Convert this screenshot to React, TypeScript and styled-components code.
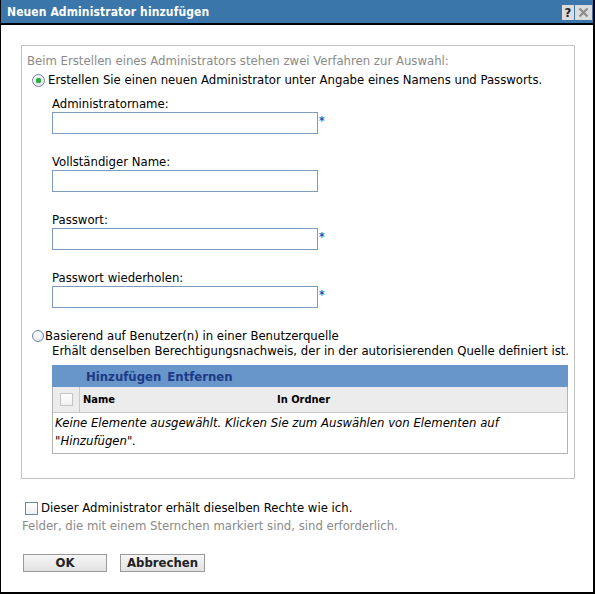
import React from "react";
import styled, { createGlobalStyle } from "styled-components";

const GlobalStyle = createGlobalStyle`
  html, body { margin: 0; padding: 0; background: #fff; }
  body {
    font-family: "DejaVu Sans Condensed", "DejaVu Sans", sans-serif;
    font-stretch: condensed;
    font-size: 13px;
    color: #000;
  }
  * { box-sizing: border-box; }
`;

const Dialog = styled.div`
  width: 595px;
  height: 594px;
  border-left: 1px solid #000;
  border-right: 2px solid #000;
  border-bottom: 2px solid #000;
  display: flex;
  flex-direction: column;
  background: #fff;
`;

const TitleBar = styled.div`
  height: 25px;
  flex: none;
  background: #3a76a9;
  border-bottom: 2px solid #000;
  display: flex;
  align-items: center;
  justify-content: space-between;
  padding: 0 1px 0 6px;
`;

const Title = styled.span`
  color: #fff;
  font-weight: bold;
  font-size: 12px;
  letter-spacing: 0.1px;
`;

const TitleButtons = styled.div`
  display: flex;
  gap: 1px;
  align-self: flex-start;
  margin-top: 5px;
`;

const TitleButton = styled.div<{ $w: number }>`
  width: ${(p) => p.$w}px;
  height: 15px;
  background: #dcdcdc;
  display: flex;
  align-items: center;
  justify-content: center;
  font-weight: bold;
  font-size: 13px;
  color: #222;
  line-height: 1;
`;

const Body = styled.div`
  padding: 20px 0 0 20px;
  display: flex;
  flex-direction: column;
`;

const Box = styled.div`
  width: 554px;
  border: 1px solid #c2c2c2;
  padding: 7px 6px 24px 5px;
  display: flex;
  flex-direction: column;
`;

const Intro = styled.div`
  color: #8a8a8a;
  line-height: 16px;
`;

const RadioRow = styled.label<{ $gap: number; $mt: number; $indent: number }>`
  display: flex;
  align-items: center;
  gap: ${(p) => p.$gap}px;
  margin-top: ${(p) => p.$mt}px;
  padding-left: ${(p) => p.$indent}px;
  line-height: 16px;
`;

const RadioDot = styled.span<{ $checked?: boolean; $size: number }>`
  width: ${(p) => p.$size}px;
  height: ${(p) => p.$size}px;
  border-radius: 50%;
  border: 1px solid #6f86a0;
  background: radial-gradient(circle at 40% 35%, #ffffff 0%, #e4e8ee 70%, #cdd4de 100%);
  display: inline-flex;
  align-items: center;
  justify-content: center;
  flex: none;
  &::after {
    content: "";
    display: ${(p) => (p.$checked ? "block" : "none")};
    width: 5px;
    height: 5px;
    border-radius: 50%;
    background: #2fae3c;
    box-shadow: 0 0 1px #1d8a28;
  }
`;

const Fields = styled.div`
  display: flex;
  flex-direction: column;
  padding-left: 25px;
  margin-top: 8px;
  gap: 20px;
`;

const Field = styled.div`
  display: flex;
  flex-direction: column;
`;

const FieldLabel = styled.div`
  line-height: 16px;
`;

const InputRow = styled.div`
  display: flex;
  align-items: flex-start;
`;

const TextInput = styled.input`
  width: 266px;
  height: 22px;
  border: 1px solid #7d9bbd;
  padding: 0 3px;
  font: inherit;
  outline: none;
  background: #fff;
`;

const Required = styled.span`
  color: #2458b0;
  font-size: 12px;
  font-weight: bold;
  line-height: 1;
  margin-top: 3px;
  margin-left: 1px;
`;

const Description = styled.div`
  padding-left: 25px;
  line-height: 15px;
  margin-top: -1px;
  white-space: nowrap;
`;

const Table = styled.div`
  margin: 7px 0 0 25px;
  width: 516px;
  border: 1px solid #b4b4b4;
  border-top: none;
  display: flex;
  flex-direction: column;
`;

const TableToolbar = styled.div`
  height: 22px;
  background: #6896cb;
  display: flex;
  align-items: center;
  gap: 6px;
  padding-left: 34px;
  margin: 0 -1px;
`;

const ToolbarLink = styled.span`
  color: #1c3a86;
  font-weight: bold;
  font-size: 13px;
`;

const HeaderRow = styled.div`
  height: 26px;
  background: #ececec;
  border-bottom: 1px solid #c8c8c8;
  display: grid;
  grid-template-columns: 27px 194px 1fr;
  align-items: stretch;
`;

const HeaderCheckCell = styled.div`
  display: flex;
  align-items: center;
  justify-content: flex-end;
  border-right: 1px solid #c8c8c8;
  padding-right: 6px;
`;

const HeaderCell = styled.div`
  display: flex;
  align-items: center;
  padding-left: 3px;
  font-weight: bold;
  font-size: 11px;
`;

const SmallBox = styled.span<{ $size: number; $border: string }>`
  width: ${(p) => p.$size}px;
  height: ${(p) => p.$size}px;
  border: 1px solid ${(p) => p.$border};
  background: linear-gradient(#ffffff, #f0f0f0);
  display: inline-block;
  flex: none;
`;

const EmptyMessage = styled.div`
  font-style: italic;
  line-height: 18px;
  padding: 1px 3px 3px 2px;
`;

const CheckRow = styled.label`
  display: flex;
  align-items: center;
  gap: 3px;
  margin: 21px 0 0 4px;
  line-height: 16px;
`;

const Note = styled.div`
  color: #8a8a8a;
  line-height: 16px;
  margin-left: 1px;
  margin-top: 2px;
`;

const Buttons = styled.div`
  display: flex;
  gap: 13px;
  margin: 20px 0 0 2px;
`;

const Button = styled.button<{ $w: number }>`
  width: ${(p) => p.$w}px;
  height: 18px;
  border: 1px solid #9a9a9a;
  background: linear-gradient(#f6f6f6, #e2e2e2);
  font-family: inherit;
  font-weight: bold;
  font-size: 13px;
  color: #222;
  padding: 0;
  line-height: 16px;
`;

export default function App() {
  return (
    <>
      <GlobalStyle />
      <Dialog>
        <TitleBar>
          <Title>Neuen Administrator hinzufügen</Title>
          <TitleButtons>
            <TitleButton $w={12}>?</TitleButton>
            <TitleButton $w={17}>
              <svg width="11" height="11" viewBox="0 0 11 11">
                <path d="M1.5 1.5 L9.5 9.5 M9.5 1.5 L1.5 9.5" stroke="#8a8a8a" strokeWidth="2" />
              </svg>
            </TitleButton>
          </TitleButtons>
        </TitleBar>
        <Body>
          <Box>
            <Intro>Beim Erstellen eines Administrators stehen zwei Verfahren zur Auswahl:</Intro>
            <RadioRow $gap={3} $mt={3} $indent={5}>
              <RadioDot $checked $size={13} />
              <span>Erstellen Sie einen neuen Administrator unter Angabe eines Namens und Passworts.</span>
            </RadioRow>
            <Fields>
              <Field>
                <FieldLabel>Administratorname:</FieldLabel>
                <InputRow>
                  <TextInput />
                  <Required>*</Required>
                </InputRow>
              </Field>
              <Field>
                <FieldLabel>Vollständiger Name:</FieldLabel>
                <InputRow>
                  <TextInput />
                </InputRow>
              </Field>
              <Field>
                <FieldLabel>Passwort:</FieldLabel>
                <InputRow>
                  <TextInput type="password" />
                  <Required>*</Required>
                </InputRow>
              </Field>
              <Field>
                <FieldLabel>Passwort wiederholen:</FieldLabel>
                <InputRow>
                  <TextInput type="password" />
                  <Required>*</Required>
                </InputRow>
              </Field>
            </Fields>
            <RadioRow $gap={1} $mt={20} $indent={5}>
              <RadioDot $size={12} />
              <span>Basierend auf Benutzer(n) in einer Benutzerquelle</span>
            </RadioRow>
            <Description>
              Erhält denselben Berechtigungsnachweis, der in der autorisierenden Quelle definiert ist.
            </Description>
            <Table>
              <TableToolbar>
                <ToolbarLink>Hinzufügen</ToolbarLink>
                <ToolbarLink>Entfernen</ToolbarLink>
              </TableToolbar>
              <HeaderRow>
                <HeaderCheckCell>
                  <SmallBox $size={13} $border="#c4c4c4" />
                </HeaderCheckCell>
                <HeaderCell>Name</HeaderCell>
                <HeaderCell>In Ordner</HeaderCell>
              </HeaderRow>
              <EmptyMessage>
                Keine Elemente ausgewählt. Klicken Sie zum Auswählen von Elementen auf "Hinzufügen".
              </EmptyMessage>
            </Table>
          </Box>
          <CheckRow>
            <SmallBox $size={13} $border="#6f86a0" />
            <span>Dieser Administrator erhält dieselben Rechte wie ich.</span>
          </CheckRow>
          <Note>Felder, die mit einem Sternchen markiert sind, sind erforderlich.</Note>
          <Buttons>
            <Button $w={84}>OK</Button>
            <Button $w={85}>Abbrechen</Button>
          </Buttons>
        </Body>
      </Dialog>
    </>
  );
}
